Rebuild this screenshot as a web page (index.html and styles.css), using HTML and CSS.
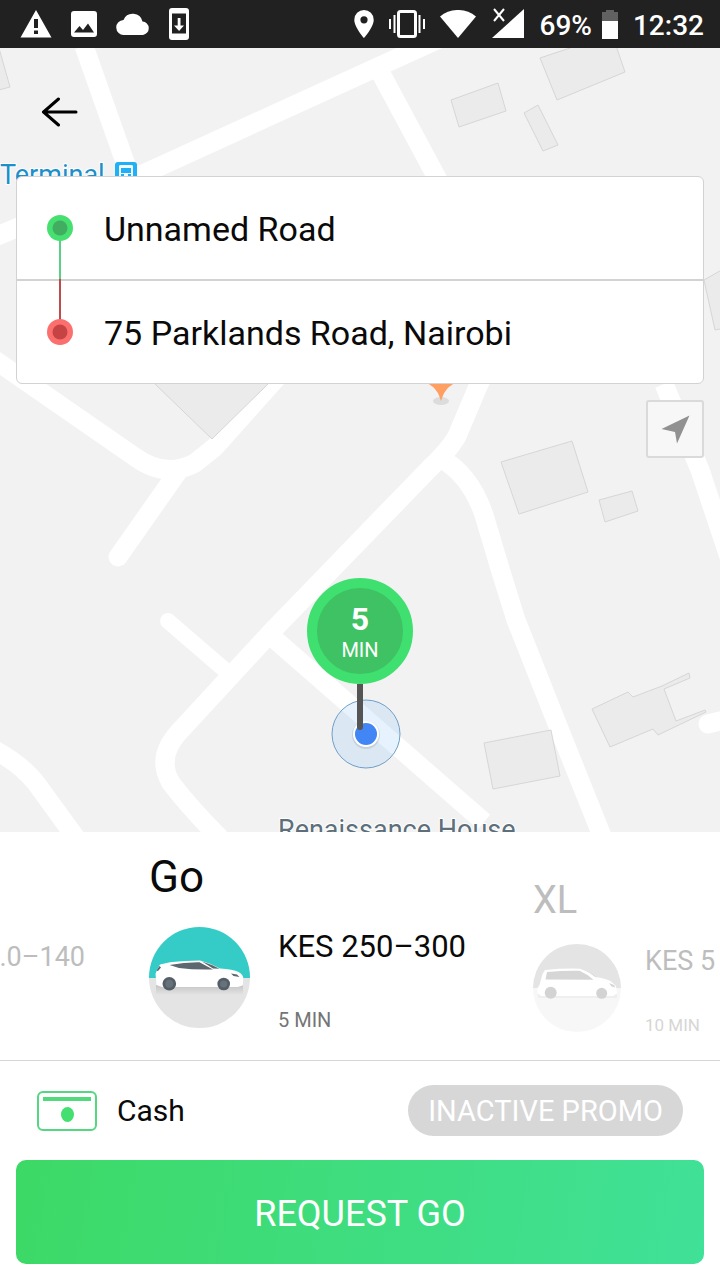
FILE: index.html
```html
<!DOCTYPE html>
<html lang="en">
<head>
<meta charset="utf-8">
<meta name="viewport" content="width=device-width, initial-scale=1">
<title>Request a ride</title>
<link rel="stylesheet" href="styles.css">
</head>
<body>
<header class="status">
  <div class="status-group status-left">
    <svg width="32" height="28" viewBox="0 0 32 28"><path fill="#fff" d="M16 0 31.500 27.500H.5z"/><path fill="#212121" d="M14 9h4v9h-4zM14 20.500h4v3.500h-4z"/></svg>
    <svg width="26" height="26" viewBox="0 0 26 26"><rect width="26" height="26" rx="3" fill="#fff"/><path fill="#212121" d="M3 21.500 8.500 15l3.500 4 5-6.500 6 9z"/></svg>
    <svg width="34" height="22" viewBox="0 0 34 22"><path fill="#fff" d="M8 22a7.500 7.500 0 0 1-.5-15A10 10 0 0 1 26.500 8.500 6.800 6.800 0 0 1 27 22z"/></svg>
    <svg width="20" height="32" viewBox="0 0 20 32"><rect width="20" height="32" rx="3" fill="#fff"/><path fill="#212121" d="M3 5.500h14v20H3z"/><path fill="#fff" d="M8.700 10h2.800v7.500H15L10.100 23 5 17.500h3.700z"/></svg>
  </div>
  <div class="status-group status-right">
    <svg width="20" height="28" viewBox="0 0 20 28"><path fill="#fff" fill-rule="evenodd" d="M10 0a9.700 9.700 0 0 1 9.700 9.700C19.700 17 10 28 10 28S.3 17 .3 9.700A9.700 9.700 0 0 1 10 0zm0 6.200a3.600 3.600 0 1 0 0 7.200 3.600 3.600 0 0 0 0-7.200z"/></svg>
    <svg width="36" height="28" viewBox="0 0 36 28"><rect x="9.500" y="1.500" width="17" height="25" rx="2" fill="none" stroke="#fff" stroke-width="3"/><path stroke="#fff" stroke-width="2" d="M1 9v10M5.500 5v18M30.500 5v18M35 9v10"/></svg>
    <svg width="36" height="28" viewBox="0 0 36 28"><path fill="#fff" d="M0 6.500C10-2.200 26-2.200 36 6.500L18 28z"/></svg>
    <svg width="34" height="32" viewBox="0 0 34 32"><path fill="#fff" d="M33 1v29H1z"/><path fill="#212121" d="M0 0h17v15H0z"/><path fill="none" stroke="#fff" stroke-width="2" d="m3 1 10 12M13 1 3 13"/></svg>
    <span class="battery"><span>69%</span>
    <svg width="16" height="29" viewBox="0 0 16 29"><path fill="#616161" d="M4 0h8v2h4v9H0V2h4z"/><path fill="#fff" d="M0 11h16v18H0z"/></svg></span>
    <time>12:32</time>
  </div>
</header>

<main class="map">
  <svg class="map-canvas" viewBox="0 48 720 784" preserveAspectRatio="xMidYMid slice" role="img" aria-label="Map">
    <g class="road">
      <path d="M84 46 132 182"/>
      <path d="M-5 237 130 180 450 34"/>
      <path d="M378 68 437 178 500 300Q492 360 479 384L457 436Q450 449 430 468L275 628 178 733Q156 758 171 783 190 808 220 838"/>
      <path d="M440 458Q470 474 484 515L501 572 516 620 556 721 602 836"/>
      <path d="M272 637 484 822"/>
      <path d="M664 384 700 470 730 560"/>
      <path d="M-5 360 135 457Q165 479 195 463L215 447 282 372"/>
      <path d="M177 473 118 557" stroke-linecap="round"/>
      <path class="road-narrow" d="M168 621 226 671"/>
      <path d="M-5 750Q22 765 36 783L76 838"/>
      <path d="M708 724 740 716" stroke-linecap="round"/>
    </g>
    <g class="building">
      <path d="M-5 34 10 87-5 91zM451 100 498 83 506 111 459 127zM524 113 538 105 558 145 543 151zM540 58 612 34 625 72 557 100zM501 462 572 441 588 492 519 514zM599 500 632 491 638 511 605 522zM484 743 551 730 560 776 493 789zM155 384 212 439 270 382 212 330zM725 268 704 280 715 330 725 328z"/>
      <path d="M592 709 628 692 633 697 662 686 689 673 690 678 664 689 676 721 705 710 706 712 658 735 653 729 610 747z"/>
    </g>
    <ellipse cx="441" cy="401" rx="8" ry="4" fill="#dcdcdc"/>
    <path fill="#ff9f62" d="M424 372h34q0 10-9 15-5 4-8 14-3-10-8-14-9-5-9-15z"/>
    <text class="label-transit" x="0" y="184">Terminal</text>
    <rect x="115" y="162" width="22" height="26" rx="3" fill="#1fb0f5"/>
    <path fill="#f3fbff" d="M119 166q0-1 2-1h10q2 0 2 1v14h-14z"/>
    <path fill="#1fb0f5" d="M121 168h10v5h-10zM121 174h3v2h-3zM128 174h3v2h-3z"/>
    <text class="label-place" x="278" y="839">Renaissance House</text>
    <circle cx="366" cy="734" r="34" fill="#64b5f6" fill-opacity=".16" stroke="#6f9fc8"/>
    <circle cx="366" cy="735" r="14" fill="#000" opacity=".1"/>
    <circle cx="366" cy="734" r="13" fill="#fff"/>
    <circle cx="366" cy="734" r="11" fill="#4285f4"/>
  </svg>

  <div class="pin">
    <div class="pin-head"><strong>5</strong><span>MIN</span></div>
    <div class="pin-stem"></div>
  </div>

  <div class="overlay">
    <button class="back" aria-label="Back"><svg width="36" height="30" viewBox="0 0 36 30"><path fill="none" stroke="#000" stroke-width="3" stroke-linecap="round" d="M16.500 2 1.500 15l15 13M2 15h32"/></svg></button>
    <section class="route">
      <button class="stop stop-from">
        <svg width="26" height="102" viewBox="0 0 26 102"><path stroke="#5bcf83" stroke-width="2" d="M13 51v51"/><circle cx="13" cy="51" r="13" fill="#45e070"/><circle cx="13" cy="51" r="7.500" fill="#41ad60"/></svg>
        <span>Unnamed Road</span>
      </button>
      <button class="stop stop-to">
        <svg width="26" height="104" viewBox="0 0 26 104"><path stroke="#bf4b4b" stroke-width="2" d="M13 0v52"/><circle cx="13" cy="53" r="13" fill="#fc6f6f"/><circle cx="13" cy="53" r="7.500" fill="#c64343"/></svg>
        <span>75 Parklands Road, Nairobi</span>
      </button>
    </section>
    <button class="locate" aria-label="My location"><svg width="30" height="30" viewBox="0 0 30 30"><path fill="#919191" d="M29.500 1.500 17 29.500 15 18 1.500 15z"/></svg></button>
  </div>
</main>

<section class="sheet">
  <div class="options">
    <button class="option option-prev"><span class="price">.0–140</span></button>
    <button class="option option-active">
      <span class="name">Go</span>
      <svg class="car" viewBox="0 0 101 101">
        <defs>
          <clipPath id="disc"><circle cx="50.500" cy="50.500" r="50.500"/></clipPath>
          <linearGradient id="shade" x2="0" y2="1"><stop stop-color="#c4c4c4"/><stop offset="1" stop-color="#e4e4e4"/></linearGradient>
        </defs>
        <g clip-path="url(#disc)"><path fill="#35cbc7" d="M0 0h101v51H0z"/><path fill="#e4e4e4" d="M0 51h101v50H0z"/><path fill="url(#shade)" d="M7 58h87v10H7z"/></g>
        <path fill="#fff" d="M6.500 47 8 43l3-5.500 10-2.200Q38 33.500 51 33.500q10 2.500 20 8 13 .8 18.500 3.500 4.500 2.500 4.800 6l-.6 7.500-5 1.500H13l-5.500-2z"/>
        <path fill="#5d676f" d="M20.500 38Q36 35 50.500 35.200L64 42.500Q45 43 30 41zM53 34.500q10 3 17.500 7.200L64 41.500zM7.500 43.500l3-4.500 1.500 1.500-3 3.500zM82 46.500l6 1 2.500 2.500-6-1z"/>
        <circle cx="20.300" cy="56.700" r="6.800" fill="#535e67"/><circle cx="20.300" cy="56.700" r="4" fill="#66717a"/>
        <circle cx="74.700" cy="57" r="6.300" fill="#535e67"/><circle cx="74.700" cy="57" r="3.600" fill="#66717a"/>
      </svg>
      <span class="info"><span class="price">KES 250–300</span><span class="eta">5 MIN</span></span>
    </button>
    <button class="option option-next">
      <span class="name">XL</span>
      <svg class="car" viewBox="0 0 88 88">
        <defs><clipPath id="disc-xl"><circle cx="44" cy="44" r="44"/></clipPath></defs>
        <g clip-path="url(#disc-xl)"><path fill="#e4e4e4" d="M0 0h88v44H0z"/><path fill="#f7f7f7" d="M0 44h88v44H0z"/><path fill="#efefef" d="M5 50h79v4H5z"/></g>
        <path fill="#fff" d="M4.500 44 6.500 41 9.500 30 12 26q18-1.800 35-1.300 8 2.300 16 8.300 9 1.300 14.500 4l5.500 5 1 7.500L80 52H8l-3.500-3z"/>
        <path fill="#d6d6d6" d="M14 28q17-1.500 32.500-1.200Q54 30 60.500 35.800L12.500 35.500zM52 26.500q6 2.500 9.500 6l3 1.500q-6-5.500-12.500-7.500zM76 39l5 2 1.500 2.500-4-1z"/>
        <circle cx="17.700" cy="48.700" r="6" fill="#d3d3d3"/><circle cx="68.700" cy="49.300" r="5.500" fill="#d3d3d3"/>
      </svg>
      <span class="info"><span class="price">KES 5</span><span class="eta">10 MIN</span></span>
    </button>
  </div>
  <div class="payment">
    <button class="method">
      <svg width="60" height="40" viewBox="0 0 60 40"><rect x="1" y="1" width="58" height="38" rx="5" fill="none" stroke="#55d681" stroke-width="2"/><path fill="#52d97e" d="M6 6h48v4H6z"/><ellipse cx="30.500" cy="23.500" rx="6.500" ry="7.500" fill="#43df70"/></svg>
      <span>Cash</span>
    </button>
    <button class="promo">INACTIVE PROMO</button>
  </div>
  <button class="request">REQUEST GO</button>
</section>
</body>
</html>
```
FILE: styles.css
```css
* {
  box-sizing: border-box;
}

body {
  margin: 0;
  min-height: 100vh;
  display: flex;
  flex-direction: column;
  background: #fff;
  color: #0a0a0a;
  font-family: Roboto, "Liberation Sans", sans-serif;
}

button {
  margin: 0;
  padding: 0;
  border: 0;
  background: none;
  color: inherit;
  font: inherit;
  text-align: left;
  cursor: pointer;
}

svg {
  display: block;
  flex: none;
}

.status {
  height: 48px;
  padding: 0 16px 0 20px;
  display: flex;
  align-items: center;
  justify-content: space-between;
  background: #212121;
  color: #fff;
  font-size: 28px;
  font-weight: 500;
  line-height: 32px;
}

.status-group {
  display: flex;
  align-items: center;
}

.status-left {
  gap: 19px;
}

.status-right {
  gap: 15px;
}

.battery {
  display: flex;
  align-items: center;
  gap: 10px;
}

.battery span,
.status time {
  padding-top: 4px;
}

.map {
  position: relative;
  flex: 1;
  overflow: hidden;
  background: #f2f2f2;
}

.map-canvas {
  position: absolute;
  inset: 0;
  width: 100%;
  height: 100%;
}

.road {
  fill: none;
  stroke: #fff;
  stroke-width: 19;
  stroke-linejoin: round;
}

.road-narrow {
  stroke-width: 16;
  stroke-linecap: round;
}

.building {
  fill: #ebebeb;
  stroke: #d6d6d6;
}

.label-transit,
.label-place {
  font-size: 27px;
  stroke: #fff;
  stroke-width: 2;
  paint-order: stroke;
}

.label-transit {
  fill: #1d8fc9;
}

.label-place {
  fill: #5d6f7b;
}

.pin {
  position: absolute;
  top: 530px;
  left: 50%;
  transform: translateX(-50%);
}

.pin-head {
  width: 106px;
  height: 106px;
  padding-top: 13px;
  border: 10px solid #3fe070;
  border-radius: 50%;
  background: #3fc263;
  color: #fff;
  text-align: center;
  font-size: 20px;
  line-height: 26px;
}

.pin-head strong,
.pin-head span {
  display: block;
}

.pin-head strong {
  font-size: 32px;
  line-height: 36px;
}

.pin-stem {
  width: 6px;
  height: 46px;
  margin: 0 auto;
  border-radius: 0 0 3px 3px;
  background: #555;
}

.overlay {
  position: relative;
  padding: 40px 16px 16px;
  display: flex;
  flex-direction: column;
  align-items: flex-start;
}

.back {
  width: 48px;
  height: 48px;
  margin: 0 0 40px 20px;
  display: grid;
  place-items: center;
}

.route {
  width: 100%;
  overflow: hidden;
  border: 1px solid #d2d2d2;
  border-radius: 6px;
  background: #fff;
}

.stop {
  width: 100%;
  padding: 0 30px;
  display: flex;
  align-items: center;
  gap: 31px;
  font-size: 34px;
  line-height: 40px;
}

.stop span {
  padding-top: 2px;
}

.stop-to {
  background: linear-gradient(#d2d2d2, #d2d2d2) top / 100% 2px no-repeat;
}

.stop-to span {
  padding-top: 4px;
}

.locate {
  width: 58px;
  height: 58px;
  margin-top: 16px;
  align-self: flex-end;
  display: grid;
  place-items: center;
  border: 2px solid #dadada;
  border-radius: 3px;
  background: #f7f7f7;
}

.sheet {
  position: relative;
  padding-bottom: 16px;
  border-radius: 6px 6px 0 0;
  background: #fff;
}

.options {
  height: 229px;
  display: flex;
  align-items: flex-start;
  overflow: hidden;
  border-bottom: 1px solid #d6d6d6;
}

.option {
  flex: none;
  display: grid;
  grid-template-columns: auto 1fr;
  white-space: nowrap;
}

.name {
  grid-column: 1 / -1;
}

.car {
  width: 100%;
}

.info {
  display: flex;
  flex-direction: column;
  justify-content: space-between;
}

.option-prev {
  width: 85px;
  padding-top: 109px;
  grid-template-columns: auto;
  justify-content: end;
  color: #bdbdbd;
  font-size: 27px;
  line-height: 32px;
}

.option-active {
  width: 384px;
  margin-left: 64px;
  padding-top: 19px;
  grid-template-columns: 101px 1fr;
  gap: 24px 28px;
}

.option-active .name {
  font-size: 44px;
  line-height: 52px;
}

.option-active .price {
  font-size: 31px;
  line-height: 40px;
}

.option-active .eta {
  color: #757575;
  font-size: 20px;
  line-height: 16px;
}

.option-next {
  padding-top: 46px;
  grid-template-columns: 88px 1fr;
  gap: 22px 24px;
  color: #bdbdbd;
}

.option-next .name {
  font-size: 38px;
  line-height: 44px;
}

.option-next .price {
  font-size: 27px;
  line-height: 34px;
}

.option-next .eta {
  color: #d6d6d6;
  font-size: 17px;
  line-height: 14px;
}

.payment {
  padding: 24px 37px;
  display: flex;
  align-items: center;
  justify-content: space-between;
}

.method {
  display: flex;
  align-items: center;
  gap: 20px;
  font-size: 30px;
  line-height: 40px;
}

.promo {
  padding: 2px 20px 0;
  border-radius: 26px;
  background: #d7d7d7;
  color: #fff;
  font-size: 29px;
  line-height: 49px;
}

.request {
  width: calc(100% - 32px);
  height: 104px;
  margin: 0 16px;
  padding-top: 4px;
  display: block;
  border-radius: 10px;
  background: linear-gradient(100deg, #3dd966, #40e198);
  color: #fff;
  text-align: center;
  font-size: 36px;
}
```
